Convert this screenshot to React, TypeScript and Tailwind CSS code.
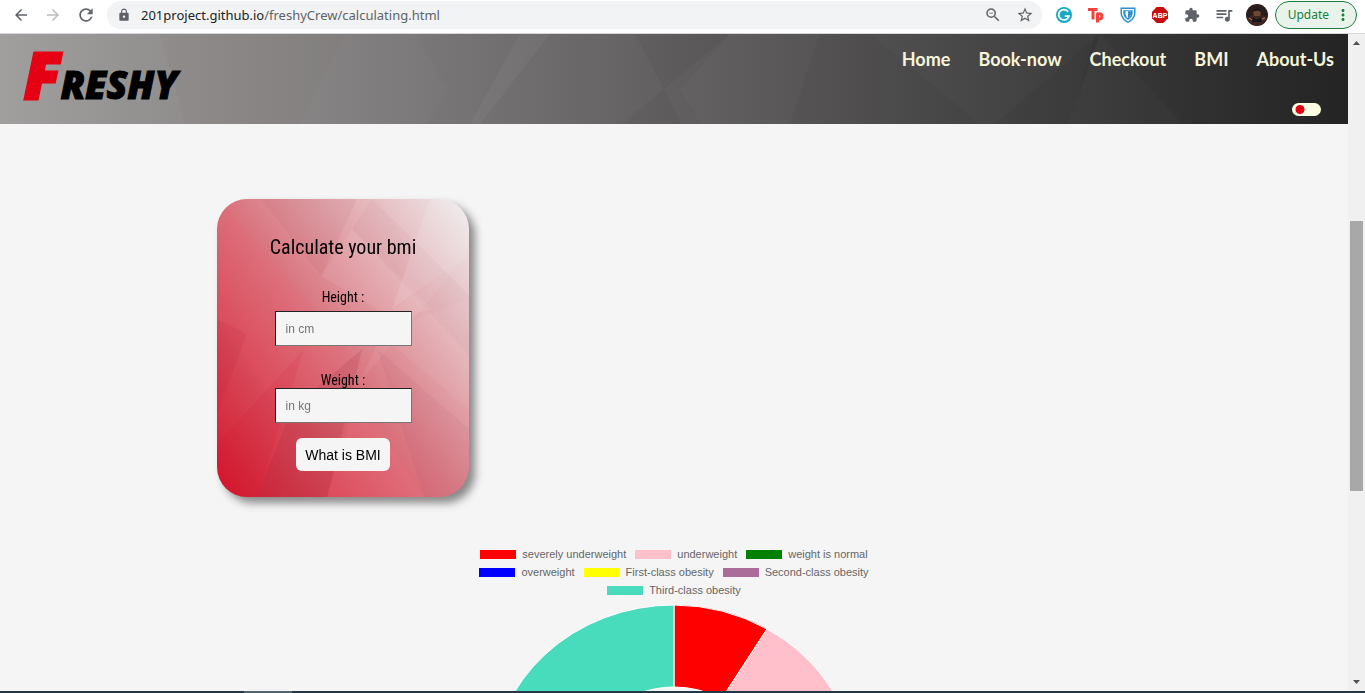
import {
  MdArrowBack,
  MdArrowForward,
  MdExtension,
  MdLock,
  MdMoreVert,
  MdQueueMusic,
  MdRefresh,
  MdStarBorder,
  MdZoomOut,
} from "react-icons/md";

const NAV = ["Home", "Book-now", "Checkout", "BMI", "About-Us"];

const LEGEND = [
  [
    { label: "severely underweight", color: "bg-[#ff0000]" },
    { label: "underweight", color: "bg-[#ffc0cb]" },
    { label: "weight is normal", color: "bg-[#008000]" },
  ],
  [
    { label: "overweight", color: "bg-[#0000ff]" },
    { label: "First-class obesity", color: "bg-[#ffff00]" },
    { label: "Second-class obesity", color: "bg-[#ac6c9a]" },
  ],
  [{ label: "Third-class obesity", color: "bg-[#48dcbc]" }],
];

function Extensions() {
  return (
    <div className="flex items-center gap-4">
      <button aria-label="Grammarly">
        <svg className="size-4" viewBox="0 0 16 16">
          <circle cx="8" cy="8" r="8" fill="#16a9c1" />
          <path d="M12.200 4.800A5.200 5.200 0 1 0 12.900 9.200H8.800" fill="none" stroke="#fff" strokeWidth="1.800" />
        </svg>
      </button>
      <button aria-label="Toolkit">
        <svg className="size-4" viewBox="0 0 16 16" fill="none" stroke="#f4433c" strokeWidth="3" strokeLinejoin="round">
          <path d="M0 2.500h9.500M5 2.500V12.500" />
          <path d="M9.500 15.500V6.800h1.800a2.600 2.600 0 0 1 0 5.200H9.500" />
        </svg>
      </button>
      <button aria-label="Shield">
        <svg className="size-4" viewBox="0 0 16 16">
          <path d="M.5.5h15v5.500c0 4.500-3.500 8-7.500 10C4 14 .5 10.500.5 6z" fill="#2a8fd0" />
          <path d="M2 2h12v4c0 3.700-2.600 6.500-6 8.400C4.600 12.500 2 9.700 2 6z" fill="#fff" />
          <path d="M3.300 3.200h9.400V6c0 3-1.900 5.200-4.700 6.900C5.200 11.200 3.300 9 3.300 6z" fill="#2a8fd0" />
          <path d="M5.500 4.300H11V6.500c0 2-1.300 3.500-3 4.800-1.700-1.300-2.500-3-2.500-4.800z" fill="#fff" />
          <path d="M8 4.300h3V6.500c0 2-1.300 3.500-3 4.800z" fill="#2a8fd0" />
        </svg>
      </button>
      <button aria-label="Adblock Plus">
        <svg className="size-4" viewBox="0 0 16 16">
          <path d="M4.700 0h6.600L16 4.700v6.600L11.300 16H4.700L0 11.300V4.700z" fill="#c70d0d" />
          <text x="8" y="10.600" textAnchor="middle" fontFamily="Liberation Sans" fontWeight="700" fontSize="7" fill="#fff">ABP</text>
        </svg>
      </button>
      <button aria-label="Extensions"><MdExtension className="size-4 text-[#5f6368]" /></button>
      <button aria-label="Media controls"><MdQueueMusic className="-mx-0.5 size-5 text-[#5f6368]" /></button>
    </div>
  );
}

function BrowserBar() {
  return (
    <div className="flex h-[34px] shrink-0 items-center border-b border-[#d5d7da] bg-white pb-1 pl-3 pr-2 pt-px text-[#5f6368]">
      <div className="flex items-center gap-3.5">
        <button aria-label="Back"><MdArrowBack className="size-[18px]" /></button>
        <button aria-label="Forward"><MdArrowForward className="size-[18px] text-[#babcbe]" /></button>
        <button aria-label="Reload"><MdRefresh className="size-5" /></button>
      </div>
      <div className="ml-[11px] flex h-7 min-w-0 flex-1 items-center rounded-full bg-[#f1f3f4] pl-2.5 pr-2">
        <MdLock className="size-3.5 shrink-0" />
        <div className="ml-2.5 flex-1 font-['Noto_Sans',sans-serif] text-[13px] leading-5">
          <span className="text-[#202124]">201project.github.io</span>/freshyCrew/calculating.html
        </div>
        <div className="flex items-center gap-3.5">
          <button aria-label="Zoom"><MdZoomOut className="size-[18px]" /></button>
          <button aria-label="Bookmark"><MdStarBorder className="size-[18px]" /></button>
        </div>
      </div>
      <div className="ml-3.5"><Extensions /></div>
      <button aria-label="Profile" className="ml-3.5">
        <svg className="size-[22px]" viewBox="0 0 22 22">
          <circle cx="11" cy="11" r="11" fill="#2a1d1b" />
          <path d="M1 14c2-2 5-2 7-4h6c3 1 5 2 7 4-3 10-17 10-20 0z" fill="#3d2722" />
          <path d="M7 8c1-4 7-4 8 0l-1 4h-6z" fill="#6e4633" />
          <path d="M7 8c0-5 8-5 8 0-2-1-5-2-8 0z" fill="#17191e" />
          <path d="M7 13c3 3 5 3 8 0l1 5H6z" fill="#191517" />
          <path d="M3 14l3 2M16 15l3-1" stroke="#9a6543" strokeWidth="1.500" />
        </svg>
      </button>
      <button className="ml-[7px] flex h-7 items-center rounded-full border border-[#188038] bg-[#e9f3ec] pl-3 pr-1 font-['Noto_Sans',sans-serif] text-xs text-[#188038]">
        Update
        <MdMoreVert className="ml-[5px] size-[18px]" />
      </button>
    </div>
  );
}

function Header() {
  return (
    <header className="relative flex h-[90px] shrink-0 justify-between bg-linear-to-r from-[#a19f9e] via-[#757273] via-35% to-[#242424]">
      <svg className="absolute inset-0 size-full" viewBox="0 0 1348 90" preserveAspectRatio="none">
        <path d="M160 0h190l-50 90H185z" fill="#85847c" opacity=".2" />
        <path d="M345 0h70l33 55-20 35H300z" fill="#fff" opacity=".02" />
        <path d="M520 0h30l-70 90h-10z" fill="#fff" opacity=".04" />
        <path d="M635 0h95l-108 90h60z" fill="#000" opacity=".04" />
        <path d="M730 0l-50 55 20 35h90l30-90z" fill="#fff" opacity=".02" />
        <path d="M870 0h225l-25 90h-90z" fill="#fff" opacity=".02" />
        <path d="M1100 0l-33 90h115z" fill="#fff" opacity=".02" />
        <path d="M1100 0L995 90h75z" fill="#000" opacity=".04" />
      </svg>
      <a href="#home" aria-label="Freshy" className="relative flex items-baseline pl-6 font-['Open_Sans',sans-serif] font-extrabold italic leading-none">
        <span className="text-[64px] leading-[82px] text-[#e60014] [-webkit-text-stroke:3px_#e60014]">F</span>
        <span className="text-[38px] text-black [-webkit-text-stroke:1px_#000]">RESHY</span>
      </a>
      <div className="relative flex flex-col items-end justify-between pb-2 pt-[11px]">
        <nav className="flex gap-7 pr-3.5 font-['Lato',sans-serif] text-lg font-bold leading-7 text-[#f5f5dc]">
          {NAV.map((item) => (
            <a key={item} href={"#" + item}>{item}</a>
          ))}
        </nav>
        <input
          type="checkbox"
          role="switch"
          aria-label="Dark mode"
          className="mr-[27px] h-[13px] w-[29px] appearance-none rounded-full bg-[#ffffe6] bg-[radial-gradient(circle_at_8px_50%,#e60014_4px,transparent_5px)]"
        />
      </div>
    </header>
  );
}

function CardBackdrop() {
  return (
    <svg className="absolute inset-0 size-full" viewBox="0 0 252 298" preserveAspectRatio="none">
      <path d="M10 10l135 155L75 230 0 120z" fill="#ff5868" opacity=".1" />
      <path d="M140 0l-36 77L44 0z" fill="#803048" opacity=".06" />
      <path d="M155 0l97 96v60L135 30z" fill="#803048" opacity=".04" />
      <path d="M135 30l80 80-38 10-73-43z" fill="#fff" opacity=".07" />
      <path d="M213 0h39v55l-77 55z" fill="#fff" opacity=".12" />
      <path d="M252 54l-110 130 35-74z" fill="#fff" opacity=".06" />
      <path d="M252 100v110l-90-75z" fill="#fff" opacity=".05" />
      <path d="M0 120l30 15-30 80z" fill="#a00022" opacity=".08" />
      <path d="M0 245l87-95-47 148H0z" fill="#d00020" opacity=".08" />
      <path d="M75 210l70-60-35 148H40z" fill="#90202f" opacity=".14" />
      <path d="M160 150l92 80v68h-45z" fill="#803048" opacity=".05" />
      <path d="M140 195l67 103h-97z" fill="#ff7888" opacity=".16" />
    </svg>
  );
}

function Field({ id, label, hint, labelClass }: { id: string; label: string; hint: string; labelClass: string }) {
  return (
    <div className="flex flex-col items-center">
      <label htmlFor={id} className={"text-sm leading-4 text-black " + labelClass}>{label}</label>
      <input
        id={id}
        placeholder={hint}
        className="h-[35px] w-[137px] border border-[#767676] border-l-[#222] border-t-[#222] bg-[#f5f5f5] px-2.5 font-['Liberation_Sans',sans-serif] text-xs placeholder:text-[#757575]"
      />
    </div>
  );
}

function BmiCard() {
  return (
    <form className="relative ml-[217px] flex h-[298px] w-[252px] flex-col items-center overflow-hidden rounded-[30px] bg-linear-[54deg] from-[#d4142a] via-[#da7882] via-50% to-[#eeeeee] pt-8 font-['Roboto_Condensed',sans-serif]">
      <CardBackdrop />
      <div className="relative flex flex-col items-center">
        <h1 className="text-xl leading-8 text-black">Calculate your bmi</h1>
        <div className="mt-[26px] flex flex-col gap-[26px]">
          <Field id="height" label="Height :" hint="in cm" labelClass="mb-1.5" />
          <Field id="weight" label="Weight :" hint="in kg" labelClass="" />
        </div>
        <button type="button" className="mt-[15px] h-[33px] rounded-md bg-[#f5f5f5] px-[9px] font-['Liberation_Sans',sans-serif] text-sm text-black">
          What is BMI
        </button>
      </div>
    </form>
  );
}

function Chart() {
  return (
    <section className="mt-12 flex min-h-0 flex-1 flex-col items-center overflow-hidden">
      <div className="flex flex-col items-center font-['Liberation_Sans',sans-serif] text-[11px] leading-[18px] text-[#666]">
        {LEGEND.map((row, i) => (
          <ul key={i} className="flex gap-[9px]">
            {row.map((entry) => (
              <li key={entry.label} className="flex items-center gap-1.5">
                <span className={"h-[9px] w-9 " + entry.color} />
                {entry.label}
              </li>
            ))}
          </ul>
        ))}
      </div>
      <svg className="mt-1.5 h-[336px] w-[364px] shrink-0 overflow-visible" viewBox="0 0 364 336">
        <g stroke="#fff" strokeWidth="1">
          <path d="M182 0A182 168 0 0 1 275 24L229.500 94A93 86 0 0 0 182 82z" fill="#ff0000" />
          <path d="M275 24A182 168 0 0 1 364 168H275A93 86 0 0 0 229.500 94z" fill="#ffc0cb" />
          <path d="M182 0A182 168 0 0 0 0 168H89A93 86 0 0 1 182 82z" fill="#48dcbc" />
        </g>
      </svg>
    </section>
  );
}

function Scrollbar() {
  return (
    <div className="flex w-[17px] shrink-0 flex-col items-center bg-[#f0f0f0] text-[#505050]">
      <svg className="h-[17px] w-[17px]" viewBox="0 0 17 17"><path d="M5 11l3.500-4 3.500 4z" fill="currentColor" /></svg>
      <div className="min-h-0 w-[13px] flex-1 pt-[170px]">
        <div className="h-[270px] bg-[#a8a8a8]" />
      </div>
      <svg className="h-[17px] w-[17px]" viewBox="0 0 17 17"><path d="M5 6l3.500 4 3.500-4z" fill="currentColor" /></svg>
    </div>
  );
}

export default function App() {
  return (
    <div className="flex h-screen flex-col overflow-hidden bg-[#f5f5f5]">
      <BrowserBar />
      <div className="flex min-h-0 flex-1">
        <main className="flex min-w-0 flex-1 flex-col">
          <Header />
          <div className="flex min-h-0 flex-1 flex-col pt-[75px]">
            <div className="drop-shadow-[6px_6px_4px_#888888]"><BmiCard /></div>
            <Chart />
          </div>
        </main>
        <Scrollbar />
      </div>
      <div className="h-0.5 shrink-0 bg-[#243746] pl-[244px]"><div className="h-0.5 w-12 bg-[#52646d]" /></div>
    </div>
  );
}
